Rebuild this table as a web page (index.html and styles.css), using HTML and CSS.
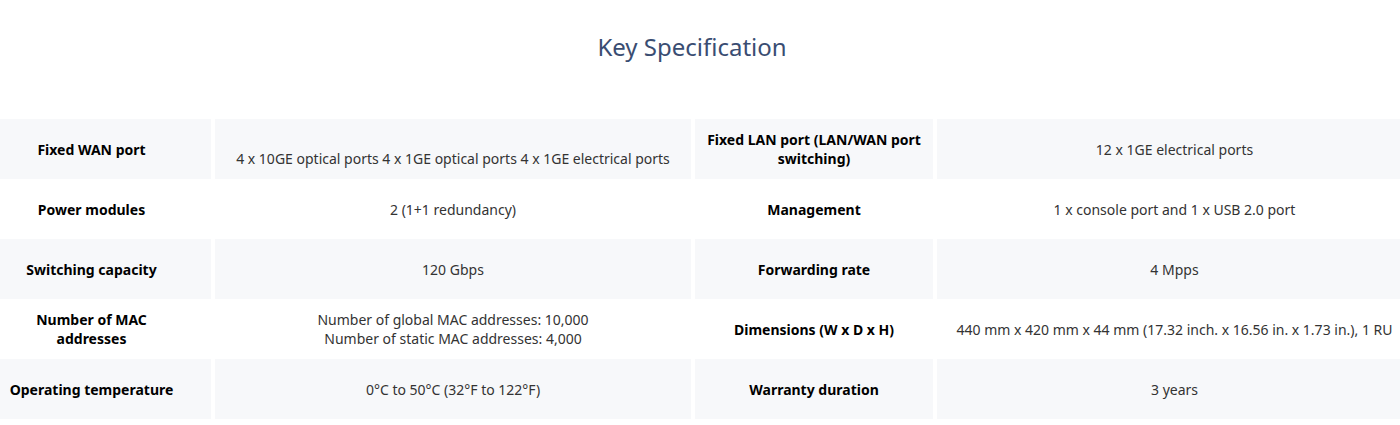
FILE: index.html
```html
<!DOCTYPE html>
<html lang="en">
<head>
<meta charset="utf-8">
<title>Key Specification</title>
<link rel="stylesheet" href="styles.css">
</head>
<body>
<div class="page">
  <section class="specs">
    <h2 class="specs-title">Key Specification</h2>
    <div class="spec-grid">
      <div class="cell label first shade">Fixed WAN port</div>
      <div class="cell value shade"><br>4 x 10GE optical ports 4 x 1GE optical ports 4 x 1GE electrical ports</div>
      <div class="cell label shade">Fixed LAN port (LAN/WAN port switching)</div>
      <div class="cell value shade">12 x 1GE electrical ports</div>

      <div class="cell label first">Power modules</div>
      <div class="cell value">2 (1+1 redundancy)</div>
      <div class="cell label">Management</div>
      <div class="cell value">1 x console port and 1 x USB 2.0 port</div>

      <div class="cell label first shade">Switching capacity</div>
      <div class="cell value shade">120 Gbps</div>
      <div class="cell label shade">Forwarding rate</div>
      <div class="cell value shade">4 Mpps</div>

      <div class="cell label first">Number of MAC addresses</div>
      <div class="cell value">Number of global MAC addresses: 10,000<br>Number of static MAC addresses: 4,000</div>
      <div class="cell label">Dimensions (W x D x H)</div>
      <div class="cell value">440 mm x 420 mm x 44 mm (17.32 inch. x 16.56 in. x 1.73 in.), 1 RU</div>

      <div class="cell label first shade">Operating temperature</div>
      <div class="cell value shade">0°C to 50°C (32°F to 122°F)</div>
      <div class="cell label shade">Warranty duration</div>
      <div class="cell value shade">3 years</div>
    </div>
  </section>
</div>
</body>
</html>
```

FILE: styles.css
```css
html, body {
  margin: 0;
  padding: 0;
  background: #ffffff;
  overflow: hidden;
}

body {
  font-family: "Noto Sans", "Open Sans", sans-serif;
  color: #333333;
}

.page {
  width: 1400px;
  overflow: hidden;
}

.specs {
  width: 1440px;
  margin-left: -28px;
  padding-top: 31px;
}

.specs-title {
  margin: 0;
  font-size: 24px;
  line-height: 32px;
  font-weight: 400;
  color: #3a4d72;
  text-align: center;
}

.spec-grid {
  margin-top: 56px;
  display: grid;
  grid-template-columns: 239px 476px 238px 475px;
  grid-auto-rows: 60px;
  column-gap: 4px;
}

.cell {
  display: flex;
  align-items: center;
  justify-content: center;
  text-align: center;
  padding: 0 8px;
  font-size: 14px;
  line-height: 19px;
}

.cell.first {
  padding: 0 36px;
}

.cell.shade {
  background: #f7f8fa;
}

.cell.label {
  font-weight: 700;
  color: #000000;
}

.cell.value {
  color: #333333;
  flex-direction: column;
}
```
